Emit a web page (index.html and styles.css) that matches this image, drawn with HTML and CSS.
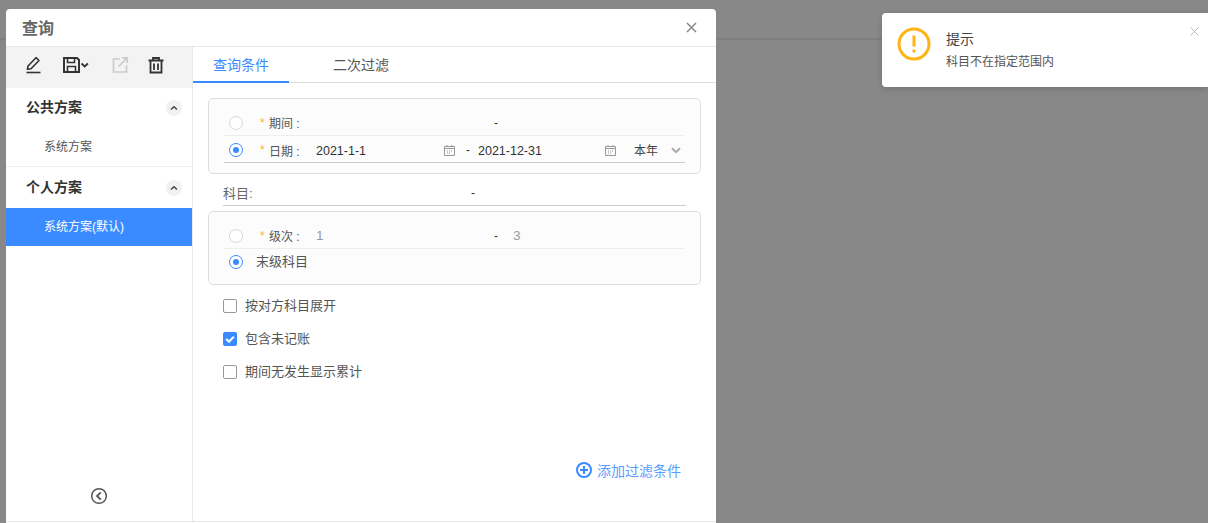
FILE: index.html
```html
<!DOCTYPE html>
<html lang="zh">
<head>
<meta charset="utf-8">
<title>查询</title>
<link rel="stylesheet" href="styles.css">
</head>
<body>
<div class="topbar"></div>

<section class="modal">
  <header class="modal-head">
    <h1 class="modal-title">查询</h1>
    <svg class="modal-close" width="11" height="11" viewBox="0 0 11 11"><path d="M1 1l9 9M10 1l-9 9" stroke="#888" stroke-width="1.500" fill="none"/></svg>
  </header>
  <div class="modal-body">
    <aside class="side">
      <div class="tools">
        <svg class="tool-edit" width="18" height="18" viewBox="0 0 18 18"><path d="M3.500 11.500L11.500 3.200l3 2.800-8 8.200-3.600.6z" transform="translate(-.5 -1.500)" fill="none" stroke="#333" stroke-width="1.600" stroke-linejoin="round"/><path d="M1.500 16.500h14" stroke="#333" stroke-width="1.600"/></svg>
        <svg class="tool-save" width="28" height="18" viewBox="0 0 28 18"><path d="M2 2h13l2 2v12H2z" fill="none" stroke="#333" stroke-width="2"/><path d="M5.500 2.500v4h7v-4M5.500 16v-5.500h8V16" fill="none" stroke="#333" stroke-width="1.600"/><path d="M19.500 7.500l3.200 3 3.200-3" fill="none" stroke="#333" stroke-width="1.800"/></svg>
        <svg class="tool-export" width="18" height="18" viewBox="0 0 18 18"><path d="M9 3H2.500v13h13V9.500" fill="none" stroke="#ccc" stroke-width="1.700"/><path d="M7.500 10.500L16 2M11 1.800h5.200V7" fill="none" stroke="#ccc" stroke-width="1.700"/></svg>
        <svg class="tool-trash" width="18" height="18" viewBox="0 0 18 18"><path d="M1.500 4.500h15M6 4.500V2h6v2.500" fill="none" stroke="#333" stroke-width="1.800"/><path d="M3.500 4.500V16.500h11V4.500M7 7.500v6.500M11 7.500v6.500" fill="none" stroke="#333" stroke-width="1.800"/></svg>
      </div>
      <div class="group">
        <div class="group-head"><span class="group-name">公共方案</span><i class="fold"><svg width="8" height="6" viewBox="0 0 8 6"><path d="M1 4.500L4 1.800l3 2.700" fill="none" stroke="#444" stroke-width="1.500"/></svg></i></div>
        <div class="plan">系统方案</div>
      </div>
      <div class="group group-own">
        <div class="group-head group-head-own"><span class="group-name">个人方案</span><i class="fold"><svg width="8" height="6" viewBox="0 0 8 6"><path d="M1 4.500L4 1.800l3 2.700" fill="none" stroke="#444" stroke-width="1.500"/></svg></i></div>
        <div class="plan plan-on">系统方案(默认)</div>
      </div>
      <div class="side-foot">
        <svg width="18" height="18" viewBox="0 0 18 18"><circle cx="9" cy="9" r="7.300" fill="none" stroke="#555" stroke-width="1.500"/><path d="M10.800 5.300L7 9l3.800 3.700" fill="none" stroke="#555" stroke-width="1.800"/></svg>
      </div>
    </aside>

    <main class="main">
      <nav class="tabs">
        <span class="tab tab-on">查询条件</span>
        <span class="tab">二次过滤</span>
      </nav>
      <div class="form">
        <div class="panel">
          <div class="row row-line">
            <i class="radio"></i>
            <span class="req">*</span><span class="lab">期间 :</span>
            <span class="dash dash-a">-</span>
          </div>
          <div class="row row-under">
            <i class="radio radio-on"></i>
            <span class="req">*</span><span class="lab">日期 :</span>
            <span class="val val-a">2021-1-1</span>
            <svg class="cal" width="11" height="11" viewBox="0 0 11 11"><path d="M.5 1.500h10v9H.5zM.5 3.500h10M3 0v2M8 0v2M3 6h1M5 6h1M7 6h1M3 8h1M5 8h1" fill="none" stroke="#999"/></svg>
            <span class="dash dash-b">-</span>
            <span class="val val-b">2021-12-31</span>
            <svg class="cal" width="11" height="11" viewBox="0 0 11 11"><path d="M.5 1.500h10v9H.5zM.5 3.500h10M3 0v2M8 0v2M3 6h1M5 6h1M7 6h1M3 8h1M5 8h1" fill="none" stroke="#999"/></svg>
            <span class="period">本年</span>
            <svg class="chev" width="10" height="7" viewBox="0 0 10 7"><path d="M1 1.200L5 5.200l4-4" fill="none" stroke="#aaa" stroke-width="2"/></svg>
          </div>
        </div>
        <div class="subject">
          <span class="subject-lab">科目:</span>
          <span class="dash dash-c">-</span>
        </div>
        <div class="panel panel-two">
          <div class="row row-line">
            <i class="radio"></i>
            <span class="req">*</span><span class="lab">级次 :</span>
            <span class="val val-muted val-c">1</span>
            <span class="dash">-</span>
            <span class="val val-muted val-d">3</span>
          </div>
          <div class="row">
            <i class="radio radio-on"></i>
            <span class="leaf">末级科目</span>
          </div>
        </div>
        <label class="check"><i class="box"></i><span class="check-text">按对方科目展开</span></label>
        <label class="check"><i class="box box-on"><svg width="14" height="14" viewBox="0 0 14 14"><path d="M3.200 7l2.800 2.800L10.800 4.600" fill="none" stroke="#fff" stroke-width="2"/></svg></i><span class="check-text">包含未记账</span></label>
        <label class="check"><i class="box"></i><span class="check-text">期间无发生显示累计</span></label>
        <div class="add">
          <svg width="16" height="16" viewBox="0 0 16 16"><circle cx="8" cy="8" r="7" fill="none" stroke="#3a8bff" stroke-width="2"/><path d="M8 4v8M4 8h8" stroke="#3a8bff" stroke-width="2"/></svg>
          <span>添加过滤条件</span>
        </div>
      </div>
    </main>
  </div>
</section>

<aside class="toast">
  <svg class="toast-icon" width="34" height="34" viewBox="0 0 34 34"><circle cx="17" cy="17" r="15" fill="none" stroke="#fdb515" stroke-width="3"/><path d="M17 8.500v11" stroke="#fdb515" stroke-width="3"/><circle cx="17" cy="24" r="1.700" fill="#fdb515"/></svg>
  <div class="toast-text">
    <div class="toast-title">提示</div>
    <div class="toast-msg">科目不在指定范围内</div>
  </div>
  <svg class="toast-close" width="9" height="9" viewBox="0 0 9 9"><path d="M.5.500l8 8M8.500.500l-8 8" stroke="#bbb" fill="none"/></svg>
</aside>
</body>
</html>
```
FILE: styles.css
```css
* { box-sizing: border-box; }
html, body { height: 100%; }
body {
  margin: 0;
  background: #888;
  overflow: hidden;
  position: relative;
  font-family: "Liberation Sans", "Noto Sans CJK SC", sans-serif;
  font-size: 12px;
  color: #444;
}
i { display: block; font-style: normal; }
.topbar { height: 40px; border-bottom: 2px solid #7f7f7f; }

.modal {
  position: absolute;
  left: 6px;
  top: 9px;
  width: 710px;
  height: 514px;
  background: #fff;
  border-radius: 4px 4px 0 0;
  display: flex;
  flex-direction: column;
}
.modal-head {
  height: 38px;
  flex: none;
  border-bottom: 1px solid #e8e8e8;
  display: flex;
  align-items: center;
  justify-content: space-between;
  padding: 0 19px 1px 16px;
}
.modal-title { margin: 0 0 1px; font-size: 16px; font-weight: 700; color: #666; }
.modal-body {
  flex: 1;
  display: flex;
  min-height: 0;
  border-bottom: 1px solid #e6e6e6;
  margin-bottom: 1px;
}

.side {
  width: 187px;
  flex: none;
  border-right: 1px solid #e8e8e8;
  display: flex;
  flex-direction: column;
}
.tools {
  height: 41px;
  flex: none;
  background: #f3f3f3;
  display: flex;
  align-items: center;
  padding: 0 0 5px 19px;
}
.tool-save { margin-left: 19px; }
.tool-export { margin-left: 21px; }
.tool-trash { margin-left: 18px; }
.group { border-bottom: 1px solid #eee; }
.group-own { border-bottom: 0; }
.group-head {
  height: 39px;
  display: flex;
  align-items: center;
  justify-content: space-between;
  padding: 0 10px 0 20px;
  color: #333;
}
.group-name { font-size: 14px; font-weight: 700; margin-top: -4px; }
.group-head-own { height: 41px; }
.fold {
  width: 16px;
  height: 16px;
  border-radius: 50%;
  background: #f1f1f1;
  display: flex;
  align-items: center;
  justify-content: center;
}
.plan { height: 39px; line-height: 41px; padding-left: 38px; color: #555; }
.plan-on { height: 38px; line-height: 38px; background: #3a8bff; color: #fff; }
.side-foot {
  margin-top: auto;
  height: 34px;
  display: flex;
  justify-content: center;
}

.main { flex: 1; min-width: 0; display: flex; flex-direction: column; }
.tabs {
  height: 36px;
  flex: none;
  border-bottom: 1px solid #ddd;
  display: flex;
}
.tab {
  width: 96px;
  height: 36px;
  padding-top: 9px;
  text-align: center;
  font-size: 14px;
  line-height: 18px;
  color: #555;
}
.tab-on { color: #3a8bff; border-bottom: 2px solid #3a8bff; margin-right: 24px; }
.form { flex: 1; padding: 15px 15px 0; position: relative; }

.panel {
  height: 76px;
  border: 1px solid #ddd;
  border-radius: 5px;
  background: #fcfcfc;
  padding: 11px 15px 0;
}
.panel-two { height: 74px; padding-top: 11px; margin-top: 5px; }
.row { height: 26px; display: flex; align-items: center; padding-left: 5px; }
.row-line { border-bottom: 1px solid #eee; }
.row-under { height: 27px; padding-top: 2px; border-bottom: 1px solid #ccc; }
.radio {
  width: 14px;
  height: 14px;
  flex: none;
  border: 1px solid #d8d8d8;
  border-radius: 50%;
  background: #fff;
}
.radio-on { border-color: #3a8bff; position: relative; }
.radio-on::after {
  content: "";
  position: absolute;
  left: 3px;
  top: 3px;
  width: 6px;
  height: 6px;
  border-radius: 50%;
  background: #3a8bff;
}
.req { margin-left: 17px; width: 9px; color: #fdb515; font-size: 12px; flex: none; }
.lab { width: 47px; flex: none; color: #555; }
.val { color: #333; font-size: 12.500px; margin-top: 1px; }
.val-a { width: 128px; flex: none; }
.cal { flex: none; }
.dash { color: #333; flex: none; }
.dash-a { margin-left: 178px; }
.dash-b { margin-left: 11px; }
.val-b { margin-left: 8px; width: 127px; flex: none; }
.period { margin: -1px 0 0 18px; width: 37px; flex: none; }
.chev { flex: none; }
.val-muted { color: #999; font-size: 13.500px; margin-top: 0; }
.val-c { width: 178px; flex: none; }
.val-d { margin-left: 15px; }
.leaf { margin: -3px 0 0 13px; font-size: 13px; color: #555; }

.subject {
  height: 32px;
  margin: 0 15px;
  border-bottom: 1px solid #ccc;
  display: flex;
  align-items: center;
  padding-top: 6px;
  font-size: 13px;
  color: #666;
}
.subject-lab { width: 248px; flex: none; }
.dash-c { font-size: 12px; }

.check {
  height: 33px;
  display: flex;
  align-items: center;
  gap: 8px;
  margin-left: 15px;
  font-size: 13px;
  color: #555;
}
.panel-two + .check { margin-top: 4px; }
.check-text { margin-top: -3px; }
.box {
  width: 14px;
  height: 14px;
  flex: none;
  border: 1px solid #999;
  border-radius: 2px;
  background: #fff;
}
.box-on { border: 0; background: #3a8bff; }
.box-on svg { display: block; }
.add {
  position: absolute;
  right: 35px;
  bottom: 41px;
  display: flex;
  align-items: center;
  gap: 5px;
  font-size: 14px;
  color: #5a9cff;
}

.toast {
  position: absolute;
  left: 882px;
  top: 13px;
  width: 326px;
  height: 74px;
  background: #fff;
  border-radius: 4px 0 0 4px;
  box-shadow: 0 2px 6px rgba(0,0,0,.15);
  display: flex;
  padding: 14px 0 0 15px;
}
.toast-icon { flex: none; }
.toast-text { margin-left: 15px; }
.toast-title { font-size: 14px; line-height: 20px; color: #444; margin-top: 2px; }
.toast-msg { font-size: 12px; line-height: 18px; margin-top: 4px; color: #555; }
.toast-close { position: absolute; right: 9px; top: 14px; }
```
